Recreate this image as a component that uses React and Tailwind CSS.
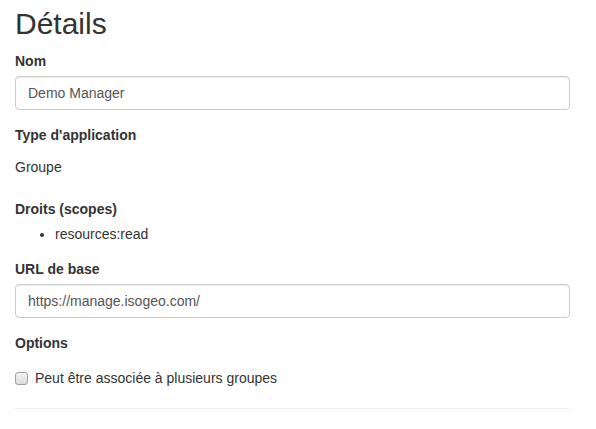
export default function App() {
  return (
    <div className="w-[596px] h-[429px] bg-white px-[15px] overflow-hidden font-['Liberation_Sans',Arial,sans-serif] text-[14px] leading-[20px] text-[#333]">
      <div className="w-[555px]">
        <h2 className="mt-[7px] mb-[11px] text-[30px] leading-[33px] font-normal">Détails</h2>
        <label className="block font-bold mb-[5px]">Nom</label>
        <div className="h-[34px] border border-[#ccc] rounded-[4px] px-[12px] flex items-center text-[#555] shadow-[inset_0_1px_1px_rgba(0,0,0,0.075)] mb-[15px]">
          Demo Manager
        </div>
        <label className="block font-bold mb-[5px]">Type d'application</label>
        <p className="py-[7px] mb-[15px]">Groupe</p>
        <label className="block font-bold mb-[5px]">Droits (scopes)</label>
        <ul className="pl-[40px] list-disc mb-[15px]">
          <li>resources:read</li>
        </ul>
        <label className="block font-bold mb-[5px]">URL de base</label>
        <div className="h-[34px] border border-[#ccc] rounded-[4px] px-[12px] flex items-center text-[#555] shadow-[inset_0_1px_1px_rgba(0,0,0,0.075)] mb-[15px]">
          https://manage.isogeo.com/
        </div>
        <label className="block font-bold">Options</label>
        <div className="mt-[15px] flex items-center h-[20px]">
          <span className="w-[13px] h-[13px] rounded-[3px] border border-[#a0a0a0] bg-gradient-to-b from-[#f4f4f4] to-[#dcdcdc] mr-[7px]"></span>
          <span>Peut être associée à plusieurs groupes</span>
        </div>
        <hr className="mt-[20px] border-0 border-t border-[#eee]" />
      </div>
    </div>
  );
}
